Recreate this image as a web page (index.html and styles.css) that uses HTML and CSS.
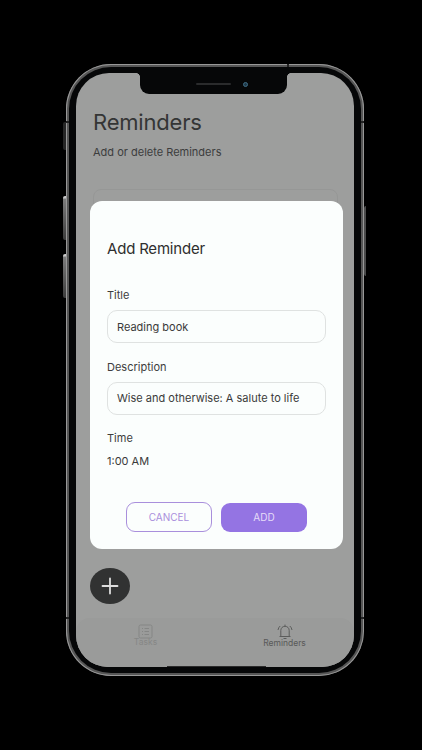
FILE: index.html
```html
<!DOCTYPE html>
<html lang="en">
<head>
<meta charset="utf-8">
<title>Reminders</title>
<link rel="stylesheet" href="styles.css">
</head>
<body>
<div class="device">
  <span class="side-btn side-silent"></span>
  <span class="side-btn side-up"></span>
  <span class="side-btn side-down"></span>
  <span class="side-btn side-power"></span>
  <span class="band band-tl"></span>
  <span class="band band-tr"></span>
  <span class="band band-bl"></span>
  <span class="band band-br"></span>
  <span class="band band-top"></span>
  <div class="bezel">
    <div class="screen">
      <main class="content">
        <h1 class="page-title">Reminders</h1>
        <p class="page-sub">Add or delete Reminders</p>
        <div class="ghost-card"></div>
      </main>
      <button class="fab" aria-label="Add">
        <svg width="18" height="18" viewBox="0 0 18 18"><path d="M9 1.500v15M1.500 9h15" stroke="#dedede" stroke-width="1.800" stroke-linecap="round" fill="none"/></svg>
      </button>
      <nav class="tabbar">
        <div class="tab tab-off">
          <svg width="15" height="15" viewBox="0 0 15 15" fill="none" stroke="#858685" stroke-width="1"><rect x="1" y="1" width="13" height="13" rx="1.500"/><path d="M4 4.500h1M4 7.500h1M4 10.500h1M6.500 4.500h4.500M6.500 7.500h4.500M6.500 10.500h4.500"/></svg>
          <span>Tasks</span>
        </div>
        <div class="tab tab-on">
          <svg width="16" height="16" viewBox="0 0 16 16" fill="none" stroke="#5c5d5c" stroke-width="1"><path d="M3.800 12.500V6.500C3.800 4 5.600 2.300 8 2.300s4.200 1.700 4.200 4.200v6M2.500 12.500h11M6.500 14.500h3M8 2.300V.6M1 6C1.300 4.200 2 3 3.200 2M15 6C14.700 4.200 14 3 12.800 2"/></svg>
          <span>Reminders</span>
        </div>
      </nav>
      <span class="home-bar"></span>
    </div>
  </div>
  <div class="notch">
    <span class="speaker"></span>
    <span class="camera"></span>
  </div>
</div>
<section class="dialog" role="dialog">
  <h2 class="dialog-title">Add Reminder</h2>
  <div class="field">
    <label class="field-label">Title</label>
    <div class="input">Reading book</div>
  </div>
  <div class="field">
    <label class="field-label">Description</label>
    <div class="input">Wise and otherwise: A salute to life</div>
  </div>
  <div class="field">
    <label class="field-label">Time</label>
    <div class="time-value">1:00 AM</div>
  </div>
  <div class="actions">
    <button class="btn btn-outline">CANCEL</button>
    <button class="btn btn-solid">ADD</button>
  </div>
</section>
</body>
</html>
```
FILE: styles.css
```css
* { box-sizing: border-box; }
html, body { margin: 0; height: 100%; }
body {
  background: #000;
  width: 422px;
  height: 750px;
  overflow: hidden;
  position: relative;
  font-family: Inter, "Noto Sans", sans-serif;
  padding: 64px 0 0 66px;
}
.device {
  position: relative;
  width: 298px;
  height: 612px;
  border-radius: 45px;
  background: #565656;
  box-shadow: inset 0 0 0 1px #989898;
  padding: 3px;
}
.bezel {
  width: 100%;
  height: 100%;
  background: #060708;
  border-radius: 42px;
  padding: 6px 7px;
}
.screen {
  position: relative;
  width: 100%;
  height: 100%;
  background: #9d9e9d;
  border-radius: 33px 33px 32px 32px;
  overflow: hidden;
  display: flex;
  flex-direction: column;
}
.side-btn {
  position: absolute;
  background: linear-gradient(180deg, #c8c8c8 0, #c8c8c8 2px, #7c7c7c 3px, #3c3c3c);
  border-radius: 2px 0 0 2px;
  width: 3px;
  left: -3px;
}
.side-silent { top: 58px; height: 28px; background: #262626; }
.side-up { top: 132px; height: 44px; }
.side-down { top: 190px; height: 44px; }
.side-power { left: auto; right: -2px; top: 142px; height: 70px; width: 2px; background: #4b4b4b; }
.band { position: absolute; width: 3px; height: 2px; background: #222; z-index: 2; }
.band-tl { left: 0; top: 57px; }
.band-tr { right: 0; top: 57px; }
.band-bl { left: 0; bottom: 57px; }
.band-br { right: 0; bottom: 57px; }
.band-top { left: 221px; top: 0; width: 2px; height: 3px; }
.notch {
  position: absolute;
  left: 74px;
  top: 9px;
  width: 147px;
  height: 21px;
  background: #060708;
  border-radius: 0 0 9px 9px;
}
.notch::before,
.notch::after {
  content: "";
  position: absolute;
  top: 0;
  width: 5px;
  height: 5px;
}
.notch::before {
  left: -5px;
  background: radial-gradient(circle at 0 100%, transparent 5px, #060708 5.500px);
}
.notch::after {
  right: -5px;
  background: radial-gradient(circle at 100% 100%, transparent 5px, #060708 5.500px);
}
.speaker {
  position: absolute;
  left: 56px;
  top: 10px;
  width: 35px;
  height: 2px;
  border-radius: 2px;
  background: #2a2b2c;
}
.camera {
  position: absolute;
  left: 103px;
  top: 9px;
  width: 5px;
  height: 5px;
  border-radius: 50%;
  background: #1f3a4a;
  border: 1px solid #3f6d85;
}
.content {
  flex: 1;
  padding: 35px 16px 0 17px;
}
.page-title {
  margin: 0;
  font-size: 22px;
  line-height: 28px;
  font-weight: 400;
  letter-spacing: -0.2px;
  color: #343535;
}
.page-sub {
  margin: 8px 0 0;
  font-size: 11px;
  line-height: 16px;
  color: #3c3d3d;
}
.ghost-card {
  margin-top: 29px;
  height: 60px;
  border: 1px solid #969796;
  border-radius: 8px;
}
.fab {
  position: absolute;
  left: 14px;
  top: 495px;
  width: 40px;
  height: 36px;
  border: 0;
  padding: 0;
  border-radius: 50%;
  background: #313232;
  display: flex;
  align-items: center;
  justify-content: center;
}
.tabbar {
  height: 49px;
  background: #9a9b9a;
  border-radius: 14px 14px 0 0;
  display: flex;
  padding-top: 6px;
}
.tab {
  flex: 1;
  display: flex;
  flex-direction: column;
  align-items: center;
  font-size: 8.500px;
  line-height: 10px;
}
.tab svg { display: block; margin-bottom: -3px; }
.tab span { margin-top: 1px; }
.tab-off { color: #868786; }
.tab-on { color: #585958; }
.home-bar {
  position: absolute;
  left: 91px;
  bottom: 0;
  width: 99px;
  height: 1px;
  background: #2b2b2b;
}
.dialog {
  position: absolute;
  left: 90px;
  top: 201px;
  width: 253px;
  height: 348px;
  background: #fbfefd;
  border-radius: 12px;
  padding: 38px 17px 0 17px;
  color: #333;
}
.dialog-title {
  margin: 0 0 28px;
  font-size: 15px;
  line-height: 20px;
  font-weight: 400;
  letter-spacing: -0.2px;
  color: #2f2f2f;
}
.field { margin-bottom: 15.500px; }
.field-label {
  display: block;
  font-size: 11px;
  line-height: 16px;
  color: #3d3d3d;
  margin-bottom: 7px;
}
.input {
  height: 33px;
  border: 1px solid #dfe2e1;
  border-radius: 10px;
  padding: 0 9px;
  display: flex;
  align-items: center;
  font-size: 11px;
  color: #3a3a3a;
  white-space: nowrap;
}
.time-value {
  font-size: 11px;
  line-height: 16px;
  color: #3a3a3a;
  margin-top: 6px;
}
.actions {
  display: flex;
  justify-content: center;
  gap: 9px;
  margin-top: 32.500px;
}
.btn {
  width: 86px;
  height: 30px;
  border-radius: 9px;
  font: inherit;
  font-size: 10px;
  padding: 0;
}
.btn-outline {
  background: transparent;
  border: 1px solid #a98fdc;
  color: #a98fdc;
}
.btn-solid {
  background: #9474e3;
  border: 0;
  color: #e6dcf8;
  height: 29px;
  margin-top: 1px;
}
```
